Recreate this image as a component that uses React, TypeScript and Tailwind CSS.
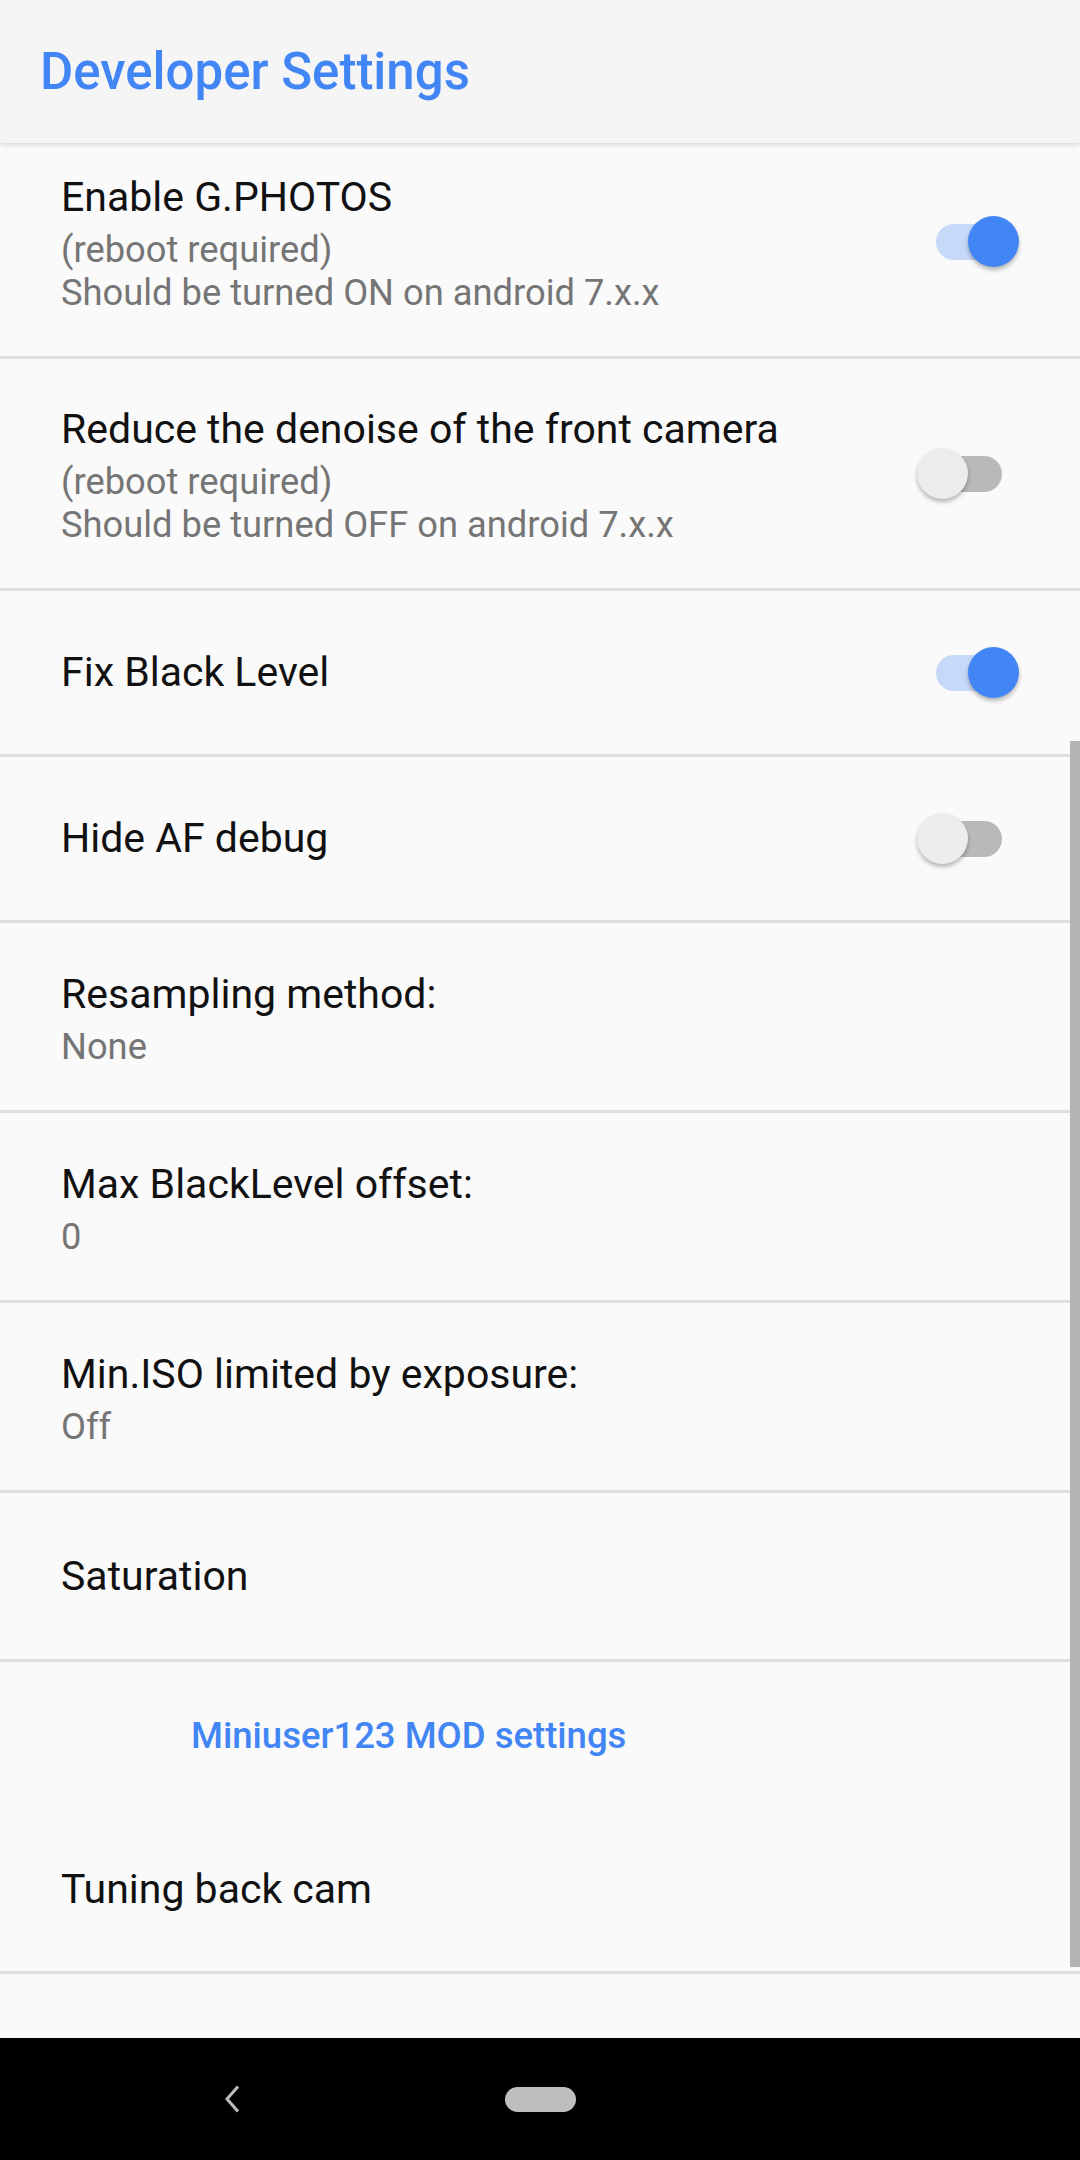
import React from "react";

function Switch({ on }: { on: boolean }) {
  return (
    <div className="relative w-[110px] h-[52px] shrink-0">
      <div
        className={
          on
            ? "absolute left-[26px] top-[8px] w-[66px] h-[36px] rounded-full bg-[#c6d9f8]"
            : "absolute left-[26px] top-[8px] w-[66px] h-[36px] rounded-full bg-[#b9b9b9]"
        }
      />
      <div
        className={
          on
            ? "absolute left-[58px] top-0 w-[51px] h-[51px] rounded-full bg-[#4285f4] shadow-[0_3px_4px_rgba(0,0,0,0.28)]"
            : "absolute left-[7px] top-0 w-[51px] h-[51px] rounded-full bg-[#ececec] shadow-[0_3px_4px_rgba(0,0,0,0.28)]"
        }
      />
    </div>
  );
}

function Divider() {
  return <div className="h-[3px] bg-[#dedede]" />;
}

function Title({ children }: { children: React.ReactNode }) {
  return <div className="text-[41px] leading-[49px] text-[#111111]">{children}</div>;
}

function Summary({ children }: { children: React.ReactNode }) {
  return <div className="text-[36.3px] leading-[43px] text-[#757575]">{children}</div>;
}

function SwitchRow3({ title, s1, s2, on }: { title: string; s1: string; s2: string; on: boolean }) {
  return (
    <>
      <div className="h-[229px] flex items-center pl-[61px] pr-[60px]">
        <div className="flex-1 flex flex-col pt-[4px]">
          <Title>{title}</Title>
          <div className="mt-[6px]">
            <Summary>{s1}</Summary>
            <Summary>{s2}</Summary>
          </div>
        </div>
        <Switch on={on} />
      </div>
      <Divider />
    </>
  );
}

function SwitchRow1({ title, on }: { title: string; on: boolean }) {
  return (
    <>
      <div className="h-[163px] flex items-center pl-[61px] pr-[60px]">
        <div className="flex-1">
          <Title>{title}</Title>
        </div>
        <Switch on={on} />
      </div>
      <Divider />
    </>
  );
}

function ValueRow({ title, value }: { title: string; value: string }) {
  return (
    <>
      <div className="h-[187px] flex flex-col justify-center pl-[61px] pt-[4px]">
        <Title>{title}</Title>
        <div className="mt-[6px]">
          <Summary>{value}</Summary>
        </div>
      </div>
      <Divider />
    </>
  );
}

export default function App() {
  return (
    <div className="w-[1080px] h-[2160px] flex flex-col bg-[#fafafa] font-['Roboto','Noto_Sans',sans-serif] overflow-hidden">
      <header className="relative z-10 h-[143px] shrink-0 bg-[#f5f5f5] flex items-center pl-[40px] shadow-[0_2px_5px_rgba(0,0,0,0.14)]">
        <h1 className="text-[51px] leading-[62px] font-medium text-[#4285f4]">Developer Settings</h1>
      </header>

      <main className="relative flex-1 overflow-hidden">
        <div className="-mt-[16px]">
          <SwitchRow3
            title="Enable G.PHOTOS"
            s1="(reboot required)"
            s2="Should be turned ON on android 7.x.x"
            on={true}
          />
          <SwitchRow3
            title="Reduce the denoise of the front camera"
            s1="(reboot required)"
            s2="Should be turned OFF on android 7.x.x"
            on={false}
          />
          <SwitchRow1 title="Fix Black Level" on={true} />
          <SwitchRow1 title="Hide AF debug" on={false} />
          <ValueRow title="Resampling method:" value="None" />
          <ValueRow title="Max BlackLevel offset:" value="0" />
          <ValueRow title="Min.ISO limited by exposure:" value="Off" />
          <div className="h-[166px] flex items-center pl-[61px]">
            <Title>Saturation</Title>
          </div>
          <Divider />
          <div className="h-[146px] flex items-center pl-[191px]">
            <div className="text-[36.5px] leading-[43px] font-medium text-[#4285f4]">Miniuser123 MOD settings</div>
          </div>
          <div className="h-[163px] flex items-center pl-[61px]">
            <Title>Tuning back cam</Title>
          </div>
          <Divider />
        </div>
        <div className="absolute right-0 top-[598px] w-[10px] h-[1226px] bg-[#b3b3b3]" />
      </main>

      <nav className="h-[122px] shrink-0 bg-black flex items-center">
        <div className="w-[464px] flex justify-center">
          <svg width="18" height="28" viewBox="0 0 18 28">
            <path d="M15 1.5 L4 14 L15 26.5" fill="none" stroke="#bdbdbd" strokeWidth="3" />
          </svg>
        </div>
        <div className="w-[71px] h-[25px] rounded-full bg-[#bebebe] ml-[41px]" />
      </nav>
    </div>
  );
}
